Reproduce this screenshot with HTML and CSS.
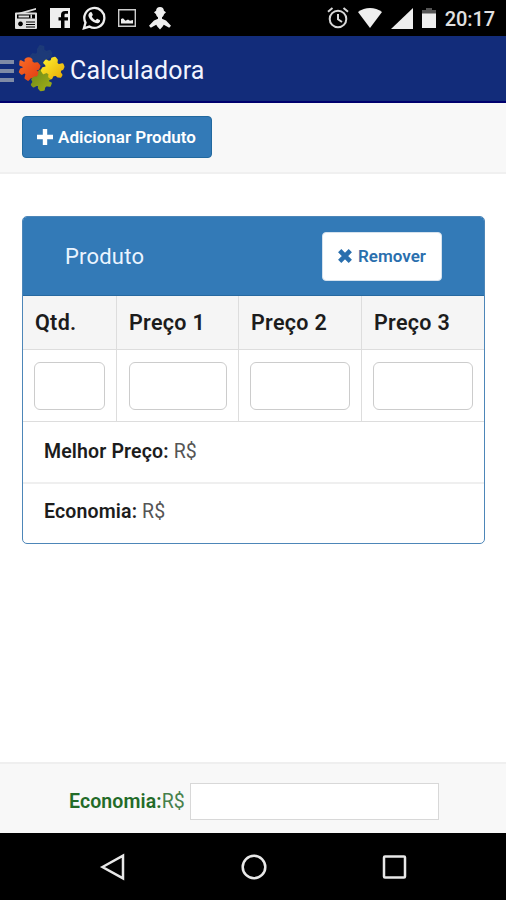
FILE: index.html
```html
<!DOCTYPE html>
<html lang="pt-BR">
<head>
    <meta charset="UTF-8">
    <meta name="viewport" content="width=device-width, initial-scale=1.0">
    <title>Calculadora</title>
    <link rel="stylesheet" href="styles.css">
</head>
<body>
    <div class="status-bar">
        <div class="status-left">
            <svg width="24" height="24" viewBox="0 0 24 24" fill="#e0e0e0">
                <path d="M3 7.200 22 2v1.800L11 7z"/>
                <path fill-rule="evenodd" d="M2 6.500h20a1 1 0 0 1 1 1V22a1 1 0 0 1-1 1H2a1 1 0 0 1-1-1V7.500a1 1 0 0 1 1-1zM3 8.500v4h18v-4zM6.500 15.500a2.400 2.400 0 1 0 .01 0zM12 15.500v1h9v-1zM12 18v1h9v-1zM12 20.500v1h9v-1z"/>
                <path d="M4.500 9.500H15v2H4.500zM16.500 8.500H18v4h-1.500z"/>
            </svg>
            <svg width="20" height="20" viewBox="0 0 20 20">
                <path fill="#eee" d="M0 0h20v20h-5.500v-7.500H18V9.300h-3.500V7.200c0-1 .5-1.400 1.500-1.400h2V3h-2.800c-3 0-4.200 1.500-4.200 4v2.300H8.500v3.200H11V20H0z"/>
            </svg>
            <svg width="24" height="24" viewBox="0 0 24 24">
                <path fill="none" stroke="#eee" stroke-width="2.300" d="M1.900 22.300 3.500 16.600A10 10 0 1 1 7.400 20.600z"/>
                <path fill="#eee" d="M8.300 6.200c.5-.4 1.200-.3 1.500.3l.9 2c.2.400 0 .8-.9 1.900.9 1.900 2.200 3 4 3.800 1-1.300 1.300-1.600 1.800-1.300l2.100 1c.6.300.5 1.200 0 2-.7 1.200-2.400 1.600-3.900 1.200-3.400-1-6-3.400-7.200-6.500-.6-1.700.1-3.500 1.700-4.400z"/>
            </svg>
            <svg width="18" height="18" viewBox="0 0 18 18">
                <path fill="none" stroke="#ccc" stroke-width="1.400" d="M.7.7h16.600v16.600H.7z"/>
                <path fill="#eee" d="M3 14.500V10l2-.7 2.500 2.500L10 10.500l2 1.200 3-.7v3.500z"/>
            </svg>
            <svg width="24" height="24" viewBox="0 0 24 24" fill="#eee">
                <path d="M12 1c2.500 0 3.900 1.700 3.900 3.800L18 6.300l-2 1.900c-.3 1.400-1 2.300-2 3v1.600l4 1.700 5 5.200-1.800 2-5.400-3-1.300 2L12 23.500l-2.500-2.800-1.300-2-5.400 3-1.800-2 5-5.200 4-1.700v-1.600c-1-.7-1.700-1.600-2-3L6 6.300l2.100-1.500C8.100 2.700 9.500 1 12 1z"/>
            </svg>
        </div>
        <div class="status-right">
            <svg width="22" height="22" viewBox="0 0 22 22" fill="none" stroke="#d8d8d8" stroke-width="2">
                <circle cx="11" cy="12" r="8.300"/>
                <path d="M11 7v5.300l4 2.700M1 4.700 5.500 1M21 4.700 16.500 1"/>
            </svg>
            <svg width="24" height="20" viewBox="0 0 24 20">
                <path fill="#eee" d="M0 4C7-1.300 17-1.300 24 4L12 20z"/>
            </svg>
            <svg width="22" height="21" viewBox="0 0 22 21">
                <path fill="#eee" d="M22 0v21H0z"/>
            </svg>
            <svg width="14" height="20" viewBox="0 0 14 20">
                <path fill="#555" d="M4 0h6v2h4v4H0V2h4z"/>
                <path fill="#eee" d="M0 5.500h14V20H0z"/>
            </svg>
            <span class="clock">20:17</span>
        </div>
    </div>

    <header class="app-bar">
        <div class="menu-icon"><span></span><span></span><span></span></div>
        <svg class="logo" width="54" height="54" viewBox="0 0 162 162" stroke-width="4" stroke-linejoin="round">
            <defs>
                <linearGradient id="red" x1="0" y1="0" x2="1" y2="1">
                    <stop offset="0" stop-color="#fa6a25"/>
                    <stop offset="1" stop-color="#e03c12"/>
                </linearGradient>
                <linearGradient id="yellow" x1="0" y1="0" x2="1" y2="1">
                    <stop offset="0" stop-color="#fff02c"/>
                    <stop offset="1" stop-color="#e6ac08"/>
                </linearGradient>
                <linearGradient id="green" x1="0" y1="0" x2="1" y2="1">
                    <stop offset="0" stop-color="#6d8a18"/>
                    <stop offset="1" stop-color="#a0ae18"/>
                </linearGradient>
            </defs>
            <path fill="#1d3a78" stroke="#1d3a78" stroke-width="6" d="M72 22 78 12 88 14 88 24 98 30 108 26 112 34 108 44 102 48 98 54 90 58 88 66 78 70 70 62 60 60 58 50 50 44 56 36 66 38 72 32z"/>
            <path fill="url(#red)" stroke="url(#red)" stroke-width="7" d="M20 58 30 63 36 60 35 53Q44 46 52 53L52 60 59 66 70 64 76 72 73 80 64 84 66 92 78 90 80 96 70 102 64 100 58 106 50 104 42 113 35 108 38 96 32 90 23 95 18 90 21 82 30 80 28 72 19 68z"/>
            <path fill="url(#green)" stroke="url(#green)" stroke-width="7" d="M76 88 84 84 90 88 90 96 98 98 106 94 110 100 108 110 102 112 102 120 110 124 107 131 96 129 90 136 89 143 80 144 75 138 76 130 68 128 58 133 54 128 59 120 55 112 61 107 71 106 76 98z"/>
            <path fill="url(#yellow)" stroke="url(#yellow)" stroke-width="7" d="M91 62 96 56 104 60 113 57 115 50 123 48 128 54 127 64 133 70 145 67 148 74 145 81 138 84 137 92 142 99 139 104 132 103 126 98 116 100 112 108 106 104 107 94 98 90 89 93 84 86 87 79 98 76 97 68z"/>
        </svg>
        <h1>Calculadora</h1>
    </header>

    <div class="toolbar">
        <button class="btn btn-add" type="button">
            <svg width="16" height="16" viewBox="0 0 16 16"><path fill="#fff" d="M5.800 0h4.400v5.800H16v4.400h-5.800V16H5.800v-5.800H0V5.800h5.800z"/></svg>
            <span>Adicionar Produto</span>
        </button>
    </div>

    <main class="content">
        <section class="panel">
            <div class="panel-heading">
                <h2>Produto</h2>
                <button class="btn btn-remove" type="button">
                    <svg width="14" height="14" viewBox="0 0 14 14"><path stroke="#2a6fae" stroke-width="4.600" d="M1.700 1.700l10.600 10.600M12.300 1.700 1.700 12.300"/></svg>
                    <span>Remover</span>
                </button>
            </div>
            <div class="prices">
                <div class="th">Qtd.</div>
                <div class="th">Preço 1</div>
                <div class="th">Preço 2</div>
                <div class="th">Preço 3</div>
                <div class="td"><input type="text" aria-label="Qtd."></div>
                <div class="td"><input type="text" aria-label="Preço 1"></div>
                <div class="td"><input type="text" aria-label="Preço 2"></div>
                <div class="td"><input type="text" aria-label="Preço 3"></div>
            </div>
            <div class="result"><b>Melhor Preço:</b> R$</div>
            <div class="result"><b>Economia:</b> R$</div>
        </section>
    </main>

    <footer class="total">
        <label for="total"><b>Economia:</b>R$</label>
        <input type="text" id="total">
    </footer>

    <nav class="nav-bar">
        <svg width="28" height="28" viewBox="0 0 28 28"><path d="M3.500 14 24 2.700v22.600z"/></svg>
        <svg width="28" height="28" viewBox="0 0 28 28"><circle cx="14" cy="14" r="11.300"/></svg>
        <svg width="28" height="28" viewBox="0 0 28 28"><rect x="4" y="3.500" width="21" height="21" rx="1"/></svg>
    </nav>
</body>
</html>
```

FILE: styles.css
```css
* {
    box-sizing: border-box;
}
body {
    margin: 0;
    height: 900px;
    display: flex;
    flex-direction: column;
    font-family: Roboto, "Liberation Sans", sans-serif;
    background: #fff;
    color: #1c1c1c;
    overflow: hidden;
}
svg {
    display: block;
    flex: none;
}
h1, h2 {
    margin: 0;
    font-weight: 400;
}
b {
    font-weight: 600;
}
.status-bar {
    height: 36px;
    background: #000;
    display: flex;
    align-items: center;
    justify-content: space-between;
    padding: 0 11px 0 14px;
}
.status-left {
    display: flex;
    align-items: center;
    gap: 12px;
}
.status-right {
    display: flex;
    align-items: center;
    gap: 9px;
}
.clock {
    color: #e0e0e0;
    font-size: 20px;
    font-weight: 500;
    line-height: 24px;
    padding-top: 2px;
    letter-spacing: -0.1px;
}
.app-bar {
    height: 67px;
    background: #122c7a;
    border-bottom: 2px solid #00006e;
    display: flex;
    align-items: center;
}
.app-bar h1 {
    color: #f2f4ff;
    font-size: 25px;
    line-height: 30px;
    letter-spacing: 0.2px;
    margin-left: 2px;
    padding-top: 4px;
}
.menu-icon {
    width: 14px;
    display: flex;
    flex-direction: column;
    gap: 5px;
    padding-top: 4px;
}
.menu-icon span {
    height: 4px;
    background: #7f8ba6;
}
.toolbar {
    height: 71px;
    background: #f8f8f8;
    border-bottom: 2px solid #f0f0f0;
    padding: 13px 22px;
}
.btn {
    display: flex;
    align-items: center;
    justify-content: center;
    font-family: inherit;
    font-size: 17px;
    font-weight: 600;
    padding: 0;
    border-radius: 4px;
}
.btn-add {
    width: 190px;
    height: 42px;
    gap: 5px;
    padding: 0 1px 1px 0;
    background: #337ab7;
    border: 1px solid #22699f;
    color: #fff;
}
.btn-remove {
    width: 120px;
    height: 49px;
    gap: 6px;
    background: #fff;
    border: 1px solid #d5e2ee;
    color: #2a6fae;
}
.content {
    flex: 1;
    padding: 42px 21px 0 22px;
}
.panel {
    height: 328px;
    border: 1px solid #4d86b8;
    border-radius: 5px;
    overflow: hidden;
}
.panel-heading {
    height: 79px;
    background: #337ab7;
    border-bottom: 1px solid #2769a0;
    display: flex;
    align-items: center;
    justify-content: space-between;
    padding: 0 42px 0 42px;
}
.panel-heading h2 {
    color: #eaf4ff;
    font-size: 22px;
    letter-spacing: 0.2px;
}
.prices {
    display: grid;
    grid-template-columns: 94px 122px 123px 1fr;
    grid-template-rows: 54px 72px;
}
.th, .td {
    border-right: 1px solid #ddd;
    border-bottom: 1px solid #ddd;
    padding: 0 11px 0 12px;
}
.th:nth-child(4n), .td:nth-child(4n) {
    border-right: 0;
}
.th {
    background: #f5f5f5;
    font-size: 21.5px;
    font-weight: 600;
    letter-spacing: 0.3px;
    line-height: 53px;
}
.td {
    padding-top: 12px;
    padding-left: 11px;
}
.td:nth-child(6) {
    padding-left: 12px;
}
.td input {
    display: block;
    width: 100%;
    height: 48px;
    border: 1px solid #ccc;
    border-radius: 6px;
    background: #fff;
}
.result {
    height: 60px;
    line-height: 59px;
    padding-left: 21px;
    font-size: 19.5px;
    letter-spacing: 0.15px;
    color: #555;
}
.result b {
    color: #1c1c1c;
}
.result + .result {
    border-top: 2px solid #efefef;
    line-height: 56px;
}
.total {
    height: 71px;
    background: #f8f8f8;
    border-top: 2px solid #efefef;
    display: flex;
    align-items: center;
    padding: 5px 0 0 69px;
    color: #46804b;
    font-size: 19.5px;
    letter-spacing: 0.1px;
}
.total b {
    color: #236b28;
}
.total input {
    width: 249px;
    height: 37px;
    margin-left: 5px;
    border: 1px solid #d8d8d8;
    background: #fff;
}
.nav-bar {
    height: 67px;
    background: #000;
    display: flex;
    align-items: center;
    justify-content: space-between;
    padding: 0 98px 0 99px;
}
.nav-bar svg {
    fill: none;
    stroke: #e8e8e8;
    stroke-width: 2.5;
}
```
